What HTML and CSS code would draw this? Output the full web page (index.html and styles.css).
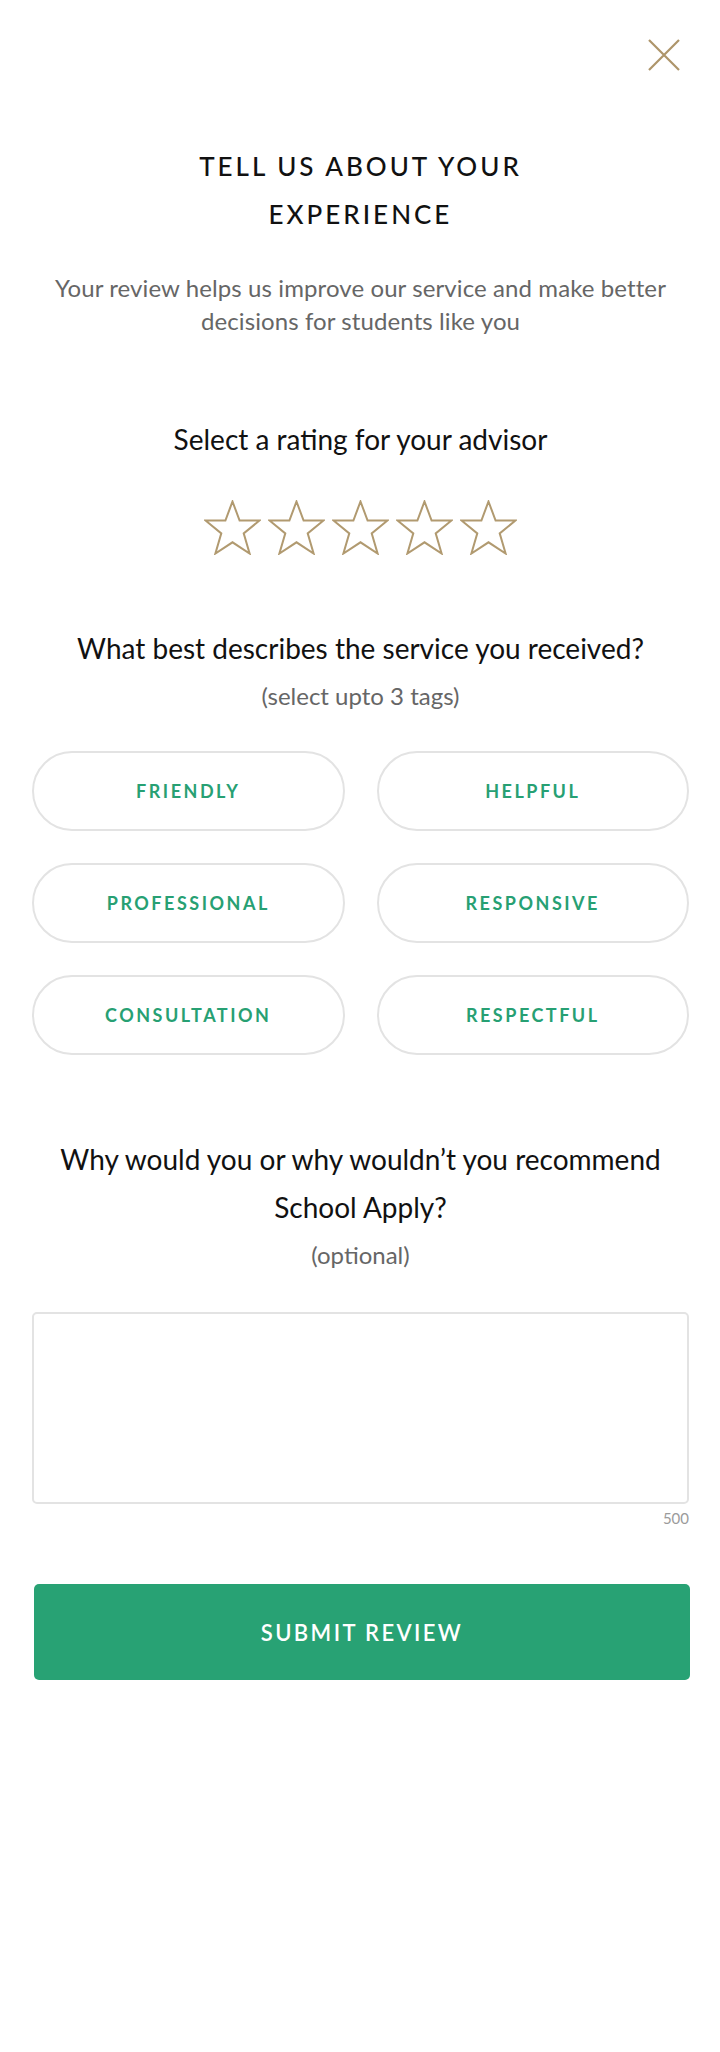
FILE: index.html
```html
<!DOCTYPE html>
<html lang="en">
<head>
<meta charset="utf-8">
<title>Tell us about your experience</title>
<link rel="stylesheet" href="styles.css">
</head>
<body>
<main class="page">
  <div class="topbar">
    <button class="close" aria-label="Close">
      <svg viewBox="0 0 32 32" width="32" height="32"><path d="M1 1 L31 31 M31 1 L1 31" stroke="#ae956a" stroke-width="2.2" fill="none"/></svg>
    </button>
  </div>

  <h1 class="title">TELL US ABOUT YOUR<br>EXPERIENCE</h1>
  <p class="subtitle">Your review helps us improve our service and make better decisions for students like you</p>

  <h2 class="question q-rating">Select a rating for your advisor</h2>
  <div class="stars">
    <svg class="star" viewBox="0 0 57 55"><polygon points="28.5,1.5 35.6,20.5 55.5,20.5 39.7,33.4 45.6,53.5 28.5,42.3 11.4,53.5 17.3,33.4 1.5,20.5 21.4,20.5"/></svg>
    <svg class="star" viewBox="0 0 57 55"><polygon points="28.5,1.5 35.6,20.5 55.5,20.5 39.7,33.4 45.6,53.5 28.5,42.3 11.4,53.5 17.3,33.4 1.5,20.5 21.4,20.5"/></svg>
    <svg class="star" viewBox="0 0 57 55"><polygon points="28.5,1.5 35.6,20.5 55.5,20.5 39.7,33.4 45.6,53.5 28.5,42.3 11.4,53.5 17.3,33.4 1.5,20.5 21.4,20.5"/></svg>
    <svg class="star" viewBox="0 0 57 55"><polygon points="28.5,1.5 35.6,20.5 55.5,20.5 39.7,33.4 45.6,53.5 28.5,42.3 11.4,53.5 17.3,33.4 1.5,20.5 21.4,20.5"/></svg>
    <svg class="star" viewBox="0 0 57 55"><polygon points="28.5,1.5 35.6,20.5 55.5,20.5 39.7,33.4 45.6,53.5 28.5,42.3 11.4,53.5 17.3,33.4 1.5,20.5 21.4,20.5"/></svg>
  </div>

  <h2 class="question q-tags">What best describes the service you received?</h2>
  <p class="hint">(select upto 3 tags)</p>
  <div class="tags">
    <button class="tag">FRIENDLY</button>
    <button class="tag">HELPFUL</button>
    <button class="tag">PROFESSIONAL</button>
    <button class="tag">RESPONSIVE</button>
    <button class="tag">CONSULTATION</button>
    <button class="tag">RESPECTFUL</button>
  </div>

  <h2 class="question q-why">Why would you or why wouldn’t you recommend<br>School Apply?</h2>
  <p class="hint">(optional)</p>
  <textarea class="comment" maxlength="500"></textarea>
  <div class="counter">500</div>

  <button class="submit">SUBMIT REVIEW</button>
</main>
</body>
</html>
```
FILE: styles.css
```css
* { box-sizing: border-box; }
html, body { margin: 0; padding: 0; background: #fff; }
body {
  font-family: "Lato", "Open Sans", "Liberation Sans", sans-serif;
  color: #111;
  width: 720px;
  min-height: 2052px;
}
.page {
  display: flex;
  flex-direction: column;
  padding: 0 31px 0 32px;
}
.topbar {
  display: flex;
  justify-content: flex-end;
  padding-top: 39px;
  padding-right: 9px;
}
.close {
  width: 32px;
  height: 32px;
  padding: 0;
  border: 0;
  background: none;
  display: block;
}
.close svg { display: block; }
.title {
  margin: 71px 0 0;
  font-size: 26px;
  font-weight: 500;
  line-height: 48px;
  letter-spacing: 3px;
  text-align: center;
  color: #111;
}
.subtitle {
  margin: 33px 0 0;
  font-size: 24px;
  line-height: 33px;
  letter-spacing: 0.1px;
  color: #666;
  text-align: center;
}
.question {
  margin: 0;
  font-size: 28px;
  font-weight: 400;
  line-height: 48px;
  text-align: center;
  color: #111;
}
.q-rating { margin-top: 78px; }
.stars {
  display: flex;
  justify-content: center;
  gap: 7px;
  margin-top: 37px;
  height: 55px;
}
.star { width: 57px; height: 55px; display: block; }
.star polygon {
  fill: none;
  stroke: #b19a70;
  stroke-width: 2;
  stroke-linejoin: miter;
}
.q-tags { margin-top: 69px; }
.hint {
  margin: 8px 0 0;
  font-size: 24px;
  line-height: 32px;
  color: #666;
  text-align: center;
}
.tags {
  margin-top: 39px;
  display: grid;
  grid-template-columns: 1fr 1fr;
  gap: 32px;
}
.tag {
  height: 80px;
  border: 2px solid #e3e3e3;
  border-radius: 40px;
  background: #fff;
  font-family: inherit;
  font-size: 18px;
  font-weight: 700;
  letter-spacing: 2.5px;
  color: #27a073;
  padding: 0;
}
.q-why { margin-top: 80px; }
.comment {
  margin-top: 41px;
  height: 192px;
  width: 100%;
  border: 2px solid #e3e3e3;
  border-radius: 5px;
  resize: none;
  font-family: inherit;
  display: block;
}
.counter {
  margin-top: 4px;
  text-align: right;
  font-size: 15px;
  line-height: 20px;
  color: #9b9b9b;
}
.submit {
  margin: 56px -1px 0 2px;
  height: 96px;
  border: 0;
  border-radius: 5px;
  background: #28a274;
  color: #fff;
  font-family: inherit;
  font-size: 22px;
  font-weight: 600;
  letter-spacing: 2.4px;
}
```
